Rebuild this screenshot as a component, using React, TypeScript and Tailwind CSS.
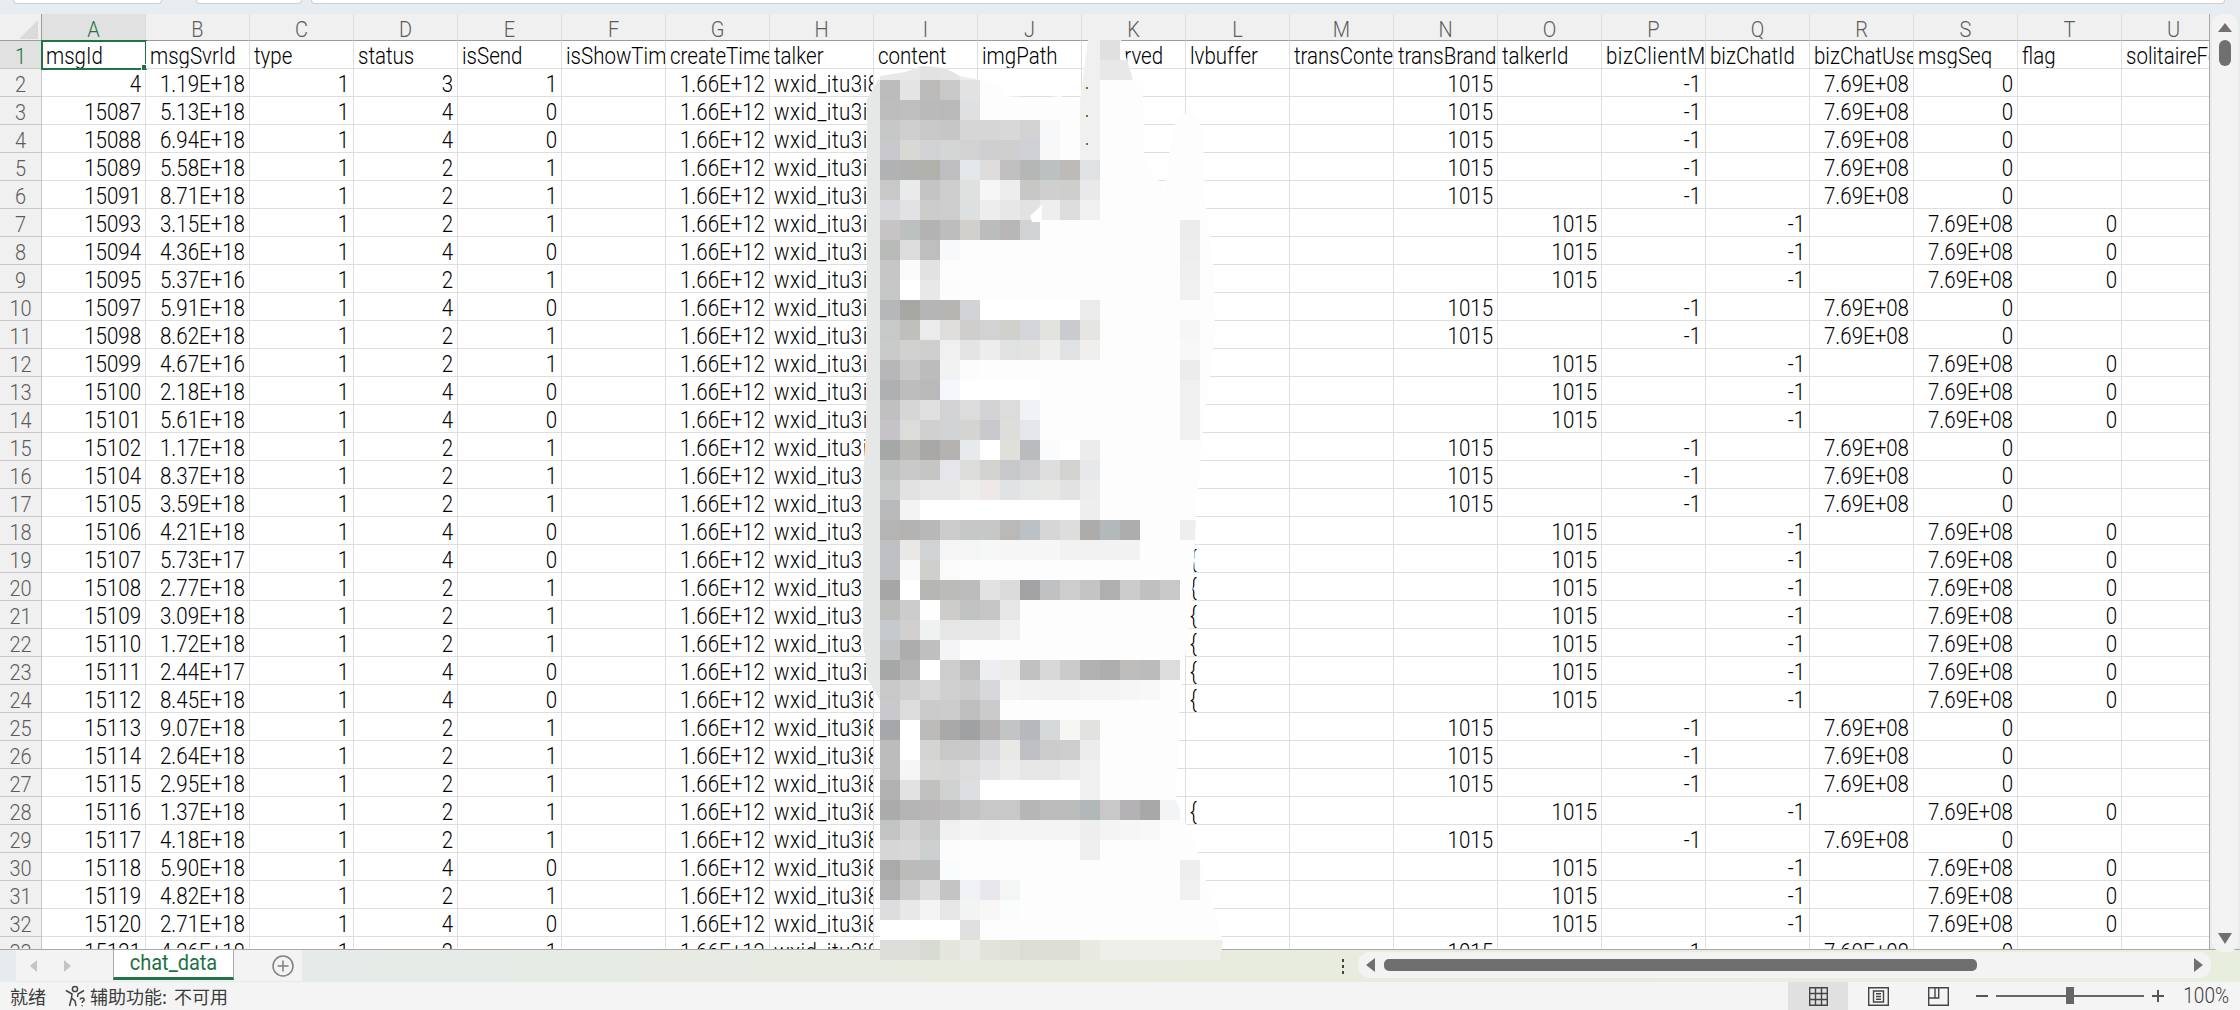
const COLUMNS = 'ABCDEFGHIJKLMNOPQRSTU'.split('');

const TITLES = [
  'msgId', 'msgSvrId', 'type', 'status', 'isSend', 'isShowTime', 'createTime', 'talker', 'content', 'imgPath',
  'reserved', 'lvbuffer', 'transContent', 'transBrandWording', 'talkerId', 'bizClientMsgId', 'bizChatId',
  'bizChatUserId', 'msgSeq', 'flag', 'solitaireFoldInfo',
];

// msgId, msgSvrId, status, isSend, layout (a: columns as typed, b: shifted one to the right)
const ROWS: [string, string, string, string, 'a' | 'b'][] = [
  ['4', '1.19E+18', '3', '1', 'a'],
  ['15087', '5.13E+18', '4', '0', 'a'],
  ['15088', '6.94E+18', '4', '0', 'a'],
  ['15089', '5.58E+18', '2', '1', 'a'],
  ['15091', '8.71E+18', '2', '1', 'a'],
  ['15093', '3.15E+18', '2', '1', 'b'],
  ['15094', '4.36E+18', '4', '0', 'b'],
  ['15095', '5.37E+16', '2', '1', 'b'],
  ['15097', '5.91E+18', '4', '0', 'a'],
  ['15098', '8.62E+18', '2', '1', 'a'],
  ['15099', '4.67E+16', '2', '1', 'b'],
  ['15100', '2.18E+18', '4', '0', 'b'],
  ['15101', '5.61E+18', '4', '0', 'b'],
  ['15102', '1.17E+18', '2', '1', 'a'],
  ['15104', '8.37E+18', '2', '1', 'a'],
  ['15105', '3.59E+18', '2', '1', 'a'],
  ['15106', '4.21E+18', '4', '0', 'b'],
  ['15107', '5.73E+17', '4', '0', 'b'],
  ['15108', '2.77E+18', '2', '1', 'b'],
  ['15109', '3.09E+18', '2', '1', 'b'],
  ['15110', '1.72E+18', '2', '1', 'b'],
  ['15111', '2.44E+17', '4', '0', 'b'],
  ['15112', '8.45E+18', '4', '0', 'b'],
  ['15113', '9.07E+18', '2', '1', 'a'],
  ['15114', '2.64E+18', '2', '1', 'a'],
  ['15115', '2.95E+18', '2', '1', 'a'],
  ['15116', '1.37E+18', '2', '1', 'b'],
  ['15117', '4.18E+18', '2', '1', 'a'],
  ['15118', '5.90E+18', '4', '0', 'b'],
  ['15119', '4.82E+18', '2', '1', 'b'],
  ['15120', '2.71E+18', '4', '0', 'b'],
  ['15121', '4.26E+18', '2', '1', 'a'],
];

// Rows with a "{" in lvbuffer
const BRACE_ROWS = [19, 20, 21, 22, 23, 24, 28];

// Titles that run right up to the next column
const WIDE_TITLES = ['bizClientMsgId'];

// Mosaic smear over the content column. First key is y, cells start at x = 880, 20px each, "." = bare patch
const MOSAIC: Record<number, string> = {
  60: 'e8e8e8 e8e8e8 e2e2e2 e4e4e4 ececec',
  80: 'bcbcbc e4e4e4 bcbbba c8c8c8 e2e2e2',
  100: 'bdbdbd bebebd bbbaba b9b9b9 dfe0e2',
  120: 'c6c8c8 cfcfcf c8c8c8 c6c6c6 d6d6d6 d6d6d6 d8d8d6 d2d2d2 f7f8fa',
  140: 'c8c8cc d8d8d4 d0d2d6 d4d6d6 d2d2d2 cfcfd2 cfcfcf cfd1d6 f8f8f8',
  160: 'b1b2b3 b1b1b0 b2b2ad bebec1 e4e7ea dedddb c2bfc1 b5b6b6 bbc0c1 bcbbb7 dfe2e4',
  180: 'c8c8c8 e9ebea c4c4c4 cdcdcd dfe1e1 f6f6f6 ededed c9c7c5 cfcfcd cfcecc e9e9e9',
  200: 'd8d8dc e2e2e4 ccccca cdcdcd dde0e0 ededed e6e8e8 e2e2e2 eeeeee dcdcdc f0f0f0',
  220: 'c6c4c4 bcc0bf b3b3b3 bcbdbc d2d0cc bbbdbd b8b6b6 d0d2d4 . . . . . . . ececec',
  240: 'b8bab8 dcdcdc bfbebc f8f9fb . . . . . . . . . . . eeeeee',
  260: 'c6c6c6 fafafa e2e2e2 . . . . . . . . . . . . efefef',
  280: 'c6c8c6 ffffff e8e8e8 fbfcfb . . . . . . . . . . . f0f0f0',
  300: 'b6b7b8 a8a7a4 b5b5b5 b6b5b2 d2d3d6 ffffff ffffff ffffff ffffff ffffff ebebeb',
  320: 'c6c9c8 c0bfbc ebebeb dfdedc cfcecc d1d3d3 d0d0cd d5d6da e2e2df c9cbce e5e5e3 . . . . f6f6f6',
  340: 'c8cbca d2d1cf cfcfcf f0f0f0 e3e5e4 ededed e0e1e1 e3e3e1 eeeeec e0e1e2 f0efed . . . . f8f8f8',
  360: 'b7b7b9 c9c9c9 bdbcba f0f3f2 fcfcfc . . . . . . . . . . ececec',
  380: 'aeafb1 bdbdbb bab9b9 f6f7fc ffffff ffffff ffffff ffffff . . . . . . . f0f0f0',
  400: 'c0c0c0 d6d6d6 e0e0e0 d2d2d4 dcdcdc d3d3d5 dcdcdc f1f2f5 . . . . . . . f0f0f0',
  420: 'c5c3c7 dcdcda d0d0d0 d1d2d6 d4d4d2 cac8cc dddedb e6e7ea . . . . . . . f0f0f0',
  440: 'a6a8a7 b8b8b5 a9a8a6 b4b3b1 e6eaed ffffff e0e0db b9bcbf f9fbfd ffffff ececec',
  460: 'c0c2c1 c9c9c9 c5c5c3 e5e5ea dcdcda d3d3d1 c6c8cb cfcfd1 dedede d2d2d0 e6e8ea',
  480: 'c8caca e2e2e2 e6e6e6 e6e6e6 eeeeec eee9e8 e0e3e5 e5e7e7 e8e8e6 e2e2e2 ecedec',
  500: 'b8b9ba f3f3f3 ffffff ffffff ffffff ffffff ffffff ffffff ffffff ffffff eeeeee',
  520: 'b4b4b4 b4b3b2 b8b8b8 cccccc c6c8c8 c6c8c6 b9b9b7 bbc1c5 d6d6d6 dddddb adacaa b3b8ba aeadad . . eeeeee',
  540: 'bfc0c4 e9e8e6 d0d2d6 f5f5f5 f5f5f5 f6f8f8 f6f6f6 f6f6f6 f6f6f6 f2f2f2 f2f2f2 f2f2f2 f2f2f2',
  560: 'bfc0c4 f9f9f9 cfcfcc fafafa',
  580: 'a6a6a7 ffffff b7b6b2 bbbbb9 bcbcbc e0e3e2 dddbd9 a3a3a6 c0c1c3 cdcdcd c5c4c2 afafaf cccccc c0c0c0 c8c8c6',
  600: 'bcbebc cccccc fdffff cdcccb c0c3c2 c6c6c6 e6e6e6',
  620: 'c6c9cc d2d0ce f0f2f2 e6e6e6 e6e6e6 e6e6e6 f0f0f0',
  640: 'c0c2c4 adadad bfbfbd f4f4f6',
  660: 'a6a8a8 b5b5b5 ffffff cdcdcd bebebe edeef2 ececec c1c1c1 d8d8d8 cbcbcb b2b2b2 aeaeae bebdbb bbbbbb dcdcde',
  680: 'c8c8c8 d0d0d0 d8d8d8 d0d0d0 cccccc d6d8dc f4f4f4 f2f2f2 f1f1f1 f1f1f1 f4f4f4 f4f4f4 f6f6f6 f8f8f8',
  700: 'c9c9cd dcdcdc cbcbcb cccccc bebebe cbcbcb',
  720: 'a6a7aa ffffff bcbbb9 a9a9a9 a0a1a3 b4b2b3 c2c4c5 b6b8bc d5d8d8 f6f6f3 e2e2e0',
  740: 'bcbcbc ffffff d4d4d2 c8c8c8 c9c9c9 d8d9dd e8e8e5 bfc0c4 cccccc cdcdcd ececec',
  760: 'bdbdbd f6f6f6 d8d8d6 d6d6d6 dcdcdc e4e4e6 ececec e6e6e6 e6e6e6 ececec f0f0f0',
  780: 'b2b2b2 e2e2e2 c2c1bf d0d2d2 dcdee2 ffffff ffffff ffffff ffffff ffffff f0f0f0',
  800: 'ababab b4b4b4 b9b6b8 bbbbbb c2c2c2 c8c8c8 c8c8c8 b6b6b6 bcbcbc bcbcbc b0b8ba c8c8c8 b4b2b4 a8a8a8 f2f4f6',
  820: 'c2c4c4 d2d2d2 c8c8c8 f0f0f0 f4f4f4 f2f2f2 f4f4f4 f4f4f4 f4f4f4 f4f4f4 eeeeee f4f4f4 f6f6f6 f8f8f8',
  840: 'd6d6d6 d8d8d8 ccd0d0 fcfcfc . . . . . . efefef',
  860: 'aaaaaa bbbbb9 bbbbbb f8fcfd . . . . . . . . . . . eeeeee',
  880: 'b4b4b4 cccccc dedede c4c4c4 f0f2f6 e8e8ec f4f6f6 . . . . . . . . f0f0f0',
  900: 'dddde0 e8e8e8 f4f4f4 e6e6e6 f2f4f4 f8f7f6 fafcfe',
  920: 'ffffff ffffff ffffff ffffff e0e0e0',
  940: 'dcdcd8 dcddd8 d8dad4 e4e6de eaebe4 e2e4dc e0e2da dcded6 dcded6 dcded6 e8eae2 efefe9 efefe9 efefe9 efefe9 efefe9 efefe9 efefe9',
};

const PATCH_OUTLINE =
  '867,100 880,76 905,72 922,66 945,68 960,76 980,80 1000,85 1006,96 1040,98 1060,96 1080,102 1088,40 1121,40 1133,80 1143,82 1144,160 1165,190 1172,130 1180,114 1195,114 1203,130 1205,200 1214,270 1215,330 1210,380 1205,410 1202,440 1200,470 1197,500 1192,600 1180,700 1176,800 1197,850 1203,870 1217,920 1223,942 1219,960 880,960 880,700 868,680 863,640 863,480 866,430 867,300';

const CELL_FONT = 'font-["Roboto","Liberation_Sans",sans-serif] font-light';
const CJK_FONT = 'font-["Noto_Sans_CJK_SC","Liberation_Sans",sans-serif]';

function CellText({ children }: { children: string }) {
  return <span className="inline-block origin-center scale-y-[1.14]">{children}</span>;
}

function Cell({ value, left = false, wide = false }: { value?: string; left?: boolean; wide?: boolean }) {
  return (
    <div
      className={`h-[28px] overflow-hidden whitespace-nowrap border-r border-b border-[#dedede] bg-white text-[20.5px] leading-[31px] text-black ${
        left ? 'pl-[4px] text-left' : 'pr-[4px] text-right'
      } ${wide ? 'tracking-[0.5px]' : ''}`}
    >
      {value ? <CellText>{value}</CellText> : null}
    </div>
  );
}

function RowHead({ n, active = false }: { n: number; active?: boolean }) {
  return (
    <div
      className={`h-[28px] overflow-hidden border-r border-b border-[#c8c8c8] text-center text-[20px] leading-[31px] ${
        active ? 'bg-[#e1e1e1] text-[#217346]' : 'bg-[#f0f0f0] text-[#5c5c5c]'
      }`}
    >
      <CellText>{String(n)}</CellText>
    </div>
  );
}

function DataRow({ n, row }: { n: number; row: (typeof ROWS)[number] }) {
  const [id, svr, status, isSend, layout] = row;
  const a = layout === 'a';
  return (
    <>
      <RowHead n={n} />
      <Cell value={id} />
      <Cell value={svr} />
      <Cell value="1" />
      <Cell value={status} />
      <Cell value={isSend} />
      <Cell />
      <Cell value="1.66E+12" />
      <Cell value="wxid_itu3i8xk" left wide />
      <Cell />
      <Cell />
      <Cell />
      <Cell value={BRACE_ROWS.includes(n) ? '{' : undefined} left />
      <Cell />
      <Cell value={a ? '1015' : undefined} />
      <Cell value={a ? undefined : '1015'} />
      <Cell value={a ? '-1' : undefined} />
      <Cell value={a ? undefined : '-1'} />
      <Cell value={a ? '7.69E+08' : undefined} />
      <Cell value={a ? '0' : '7.69E+08'} />
      <Cell value={a ? undefined : '0'} />
      <Cell />
    </>
  );
}

function Sheet() {
  return (
    <div className={`h-[935px] w-[2210px] overflow-hidden border-r border-[#a8a8a8] ${CELL_FONT}`}>
      <div className="grid w-[2226px] grid-cols-[42px_repeat(21,104px)]">
        <div className="h-[27px] border-r border-b border-[#9c9c9c] bg-[#f0f0f0] p-[6px_3px_1px_19px]">
          <svg width="19" height="19" viewBox="0 0 19 19">
            <polygon points="19,0 19,19 0,19" fill="#dadada" />
          </svg>
        </div>
        {COLUMNS.map((c, i) => (
          <div
            key={c}
            className={`h-[27px] overflow-hidden border-r border-b border-r-[#dcdcdc] border-b-[#9c9c9c] text-center text-[20px] leading-[31px] ${
              i === 0 ? 'bg-[#e1e1e1] text-[#217346]' : 'bg-[#f0f0f0] text-[#5c5c5c]'
            }`}
          >
            <CellText>{c}</CellText>
          </div>
        ))}

        <RowHead n={1} active />
        {TITLES.map((t, i) => (
          <div key={t} className="relative">
            <Cell value={t} left wide={WIDE_TITLES.includes(t)} />
            {i === 0 && (
              <div className="absolute -top-[1px] -left-[1px] h-[30px] w-[106px] border-2 border-[#217346]">
                <div className="absolute -right-[3px] -bottom-[3px] h-[7px] w-[7px] border border-white bg-[#217346]" />
              </div>
            )}
          </div>
        ))}

        {ROWS.map((row, i) => (
          <DataRow key={row[0]} n={i + 2} row={row} />
        ))}
      </div>
    </div>
  );
}

function MosaicPatch() {
  return (
    <svg className="pointer-events-none absolute top-0 left-0 z-20" width="2240" height="1010" viewBox="0 0 2240 1010">
      <defs>
        <clipPath id="patch">
          <polygon points={PATCH_OUTLINE} />
        </clipPath>
      </defs>
      <g clipPath="url(#patch)">
        <rect x="860" y="30" width="380" height="935" fill="#fdfdfd" />
        <rect x="860" y="80" width="20" height="620" fill="#e6e7e7" />
        <rect x="1080" y="30" width="20" height="130" fill="#f0f0f0" />
        <rect x="1100" y="30" width="20" height="30" fill="#e0e0e0" />
        <rect x="1100" y="60" width="33" height="20" fill="#e8e8e8" />
        {Object.entries(MOSAIC).map(([y, line]) =>
          line.split(' ').map((hex, i) =>
            hex === '.' ? null : (
              <rect key={`${y}-${i}`} x={880 + i * 20} y={Number(y)} width="20" height="20" fill={`#${hex}`} />
            ),
          ),
        )}
      </g>
      <polygon points="1030,216 1042,205 1042,222 1032,222" fill="#ffffff" />
      <rect x="1086" y="87" width="2" height="2" fill="#8a6a20" />
      <rect x="1086" y="115" width="2" height="2" fill="#8a6a20" />
      <rect x="1086" y="143" width="2" height="2" fill="#8a6a20" />
    </svg>
  );
}

function VerticalScrollbar() {
  return (
    <div className="relative z-10 ml-[2px] flex h-[938px] w-[26px] flex-col items-center rounded-[10px] bg-[#f3f3f3] pt-[9px]">
      <div className="h-0 w-0 border-x-[7px] border-b-[9px] border-x-transparent border-b-[#707070]" />
      <div className="mt-[8px] h-[26px] w-[12px] rounded-[6px] bg-[#707070]" />
      <div className="mt-auto mb-[8px] h-0 w-0 border-x-[7px] border-t-[11px] border-x-transparent border-t-[#707070]" />
    </div>
  );
}

function SheetTabs() {
  return (
    <div className="flex h-[33px] border-t border-[#a8a8a8] bg-linear-to-r from-[#e5ebee] via-[#e8ebdf] via-45% to-[#e8eede]">
      <div className="ml-[16px] flex h-[31px] w-[286px] items-center bg-[#f3f3f3]">
        <div className="ml-[14px] h-0 w-0 border-y-[6px] border-r-[7px] border-y-transparent border-r-[#c4c4c4]" />
        <div className="ml-[27px] h-0 w-0 border-y-[6px] border-l-[7px] border-y-transparent border-l-[#c4c4c4]" />
        <div className="ml-[42px] h-[30px] w-[121px] self-start border-x border-b-[3px] border-x-[#a8a8a8] border-b-[#217346] bg-white text-center font-['Roboto','Liberation_Sans',sans-serif] text-[20px] leading-[25px] text-[#1e7145]">
          <CellText>chat_data</CellText>
        </div>
        <svg className="ml-[38px]" width="22" height="22" viewBox="0 0 22 22" fill="none" stroke="#7f7f7f">
          <circle cx="11" cy="11" r="10" strokeWidth="1.5" />
          <path d="M11 5.5v11M5.5 11h11" strokeWidth="1.5" />
        </svg>
      </div>
      <div className="ml-auto flex items-center">
        <div className="mr-[14px] flex flex-col gap-[3px]">
          <div className="h-[3px] w-[2px] bg-[#444]" />
          <div className="h-[3px] w-[2px] bg-[#444]" />
          <div className="h-[3px] w-[2px] bg-[#444]" />
        </div>
        <div className="mr-[29px] mb-[2px] flex h-[26px] w-[853px] items-center rounded-[12px] bg-[#f3f3f3] px-[8px]">
          <div className="h-0 w-0 border-y-[7px] border-r-[9px] border-y-transparent border-r-[#707070]" />
          <div className="ml-[9px] h-[12px] w-[593px] rounded-[5px] bg-[#6f6f6f]" />
          <div className="ml-auto h-0 w-0 border-y-[7px] border-l-[9px] border-y-transparent border-l-[#707070]" />
        </div>
      </div>
    </div>
  );
}

function StatusBar() {
  return (
    <div className={`flex h-[28px] items-center bg-[#f4f4f4] text-[18px] text-[#3c3c3c] ${CJK_FONT}`}>
      <span className="ml-[10px]">就绪</span>
      <svg className="ml-[18px]" width="24" height="24" viewBox="0 0 24 24" fill="none" stroke="#444" strokeWidth="1.5">
        <circle cx="11" cy="5" r="2.6" />
        <path d="M2 6.5 8 10 7.5 14 5.5 22M20 6.5 14 10 13.5 13M7.5 14 11 17 12 22" />
        <path d="M16 15.5c.5-2 4-2 4.2 0 .1 1.6-2.1 1.7-2.1 3.4M18.1 21.2v1" />
      </svg>
      <span className="ml-[2px] [word-spacing:3px]">辅助功能: 不可用</span>

      <div className="ml-auto flex h-full items-center">
        <div className="flex h-full w-[60px] items-center justify-center bg-[#e0e0e0]">
          <svg width="19" height="19" viewBox="0 0 19 19" fill="none" stroke="#444" strokeWidth="1.4">
            <path d="M.7.7h17.6v17.6H.7zM6.5.7v17.6M12.5.7v17.6M.7 6.5h17.6M.7 12.5h17.6" />
          </svg>
        </div>
        <div className="flex h-full w-[60px] items-center justify-center">
          <svg width="21" height="19" viewBox="0 0 21 19" fill="none" stroke="#444" strokeWidth="1.4">
            <path d="M.7.7h19.6v17.6H.7zM5.5 4h10v11h-10zM8 6.7h5M8 9.5h5M8 12.3h5" />
          </svg>
        </div>
        <div className="flex h-full w-[60px] items-center justify-center">
          <svg width="21" height="19" viewBox="0 0 21 19" fill="none" stroke="#444" strokeWidth="1.4">
            <path d="M.7.7h19.6v17.6H.7zM.7 11h10V.7M7 .7V11" />
          </svg>
        </div>
        <div className="ml-[8px] h-[1.5px] w-[12px] bg-[#555]" />
        <div className="relative ml-[8px] h-[2px] w-[148px] bg-[#666]">
          <div className="absolute -top-[8px] left-[70px] h-[17px] w-[8px] bg-[#666]" />
        </div>
        <div className="relative ml-[8px] h-[1.5px] w-[12px] bg-[#555]">
          <div className="absolute -top-[5px] left-[5px] h-[12px] w-[1.5px] bg-[#555]" />
        </div>
        <span className={`mr-[11px] ml-[19px] text-[19px] ${CELL_FONT}`}>
          <CellText>100%</CellText>
        </span>
      </div>
    </div>
  );
}

function TopBar() {
  return (
    <div className="flex h-[14px] items-start gap-[9px] bg-[#e6ecef] pr-[15px] pl-[13px]">
      <div className="h-[4px] w-[149px] rounded-b-[5px] border-x border-b border-[#cfcfcf] bg-white" />
      <div className="ml-[25px] h-[4px] w-[106px] rounded-b-[5px] border-x border-b border-[#cfcfcf] bg-white" />
      <div className="h-[4px] flex-1 rounded-b-[5px] border-x border-b border-[#cfcfcf] bg-white" />
    </div>
  );
}

export default function App() {
  return (
    <div className="relative flex h-[1010px] w-[2240px] flex-col overflow-hidden bg-[#e6ecef]">
      <TopBar />
      <div className="flex h-[935px]">
        <Sheet />
        <VerticalScrollbar />
      </div>
      <SheetTabs />
      <StatusBar />
      <MosaicPatch />
    </div>
  );
}
